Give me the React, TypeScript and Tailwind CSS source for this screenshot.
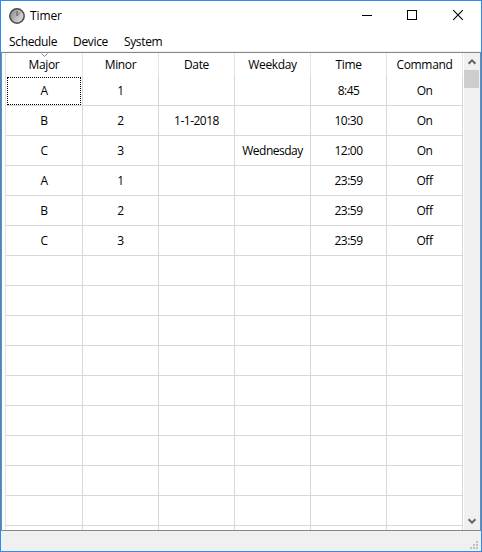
const columns = ['Major', 'Minor', 'Date', 'Weekday', 'Time', 'Command'];

const schedule: string[][] = [
  ['A', '1', '', '', '8:45', 'On'],
  ['B', '2', '1-1-2018', '', '10:30', 'On'],
  ['C', '3', '', 'Wednesday', '12:00', 'On'],
  ['A', '1', '', '', '23:59', 'Off'],
  ['B', '2', '', '', '23:59', 'Off'],
  ['C', '3', '', '', '23:59', 'Off'],
];

const emptyRow = ['', '', '', '', '', ''];
const rows = [...schedule, ...Array.from({ length: 10 }, () => emptyRow)];

function ClockIcon() {
  return (
    <svg width="18" height="18" viewBox="0 0 18 18" className="block">
      <defs>
        <linearGradient id="face" x1="0" y1="0.2" x2="1" y2="0.8">
          <stop offset="0" stopColor="#8c8c8c" />
          <stop offset="0.6" stopColor="#c4c4c4" />
          <stop offset="1" stopColor="#dedede" />
        </linearGradient>
      </defs>
      <circle cx="9" cy="9" r="7.2" fill="url(#face)" stroke="#484848" strokeWidth="1.5" />
      <path d="M9 9V4" stroke="#555" strokeWidth="1" />
      <path d="M9 9L12 5.5" stroke="#666" strokeWidth="0.8" />
    </svg>
  );
}

function TitleBar() {
  return (
    <div className="flex h-[30px] items-center">
      <div className="ml-[7px] w-[22px]">
        <ClockIcon />
      </div>
      <span className="tracking-[-0.1px]">Timer</span>
      <div className="ml-auto flex">
        <svg width="46" height="30" viewBox="0 0 46 30" shapeRendering="crispEdges">
          <path d="M18 14.5h10" stroke="#000" />
        </svg>
        <svg width="46" height="30" viewBox="0 0 46 30" shapeRendering="crispEdges">
          <rect x="17.5" y="9.5" width="9" height="9" fill="none" stroke="#000" />
        </svg>
        <svg width="45" height="30" viewBox="0 0 45 30">
          <path d="M17.2 9.2l9.6 9.6M26.8 9.2l-9.6 9.6" stroke="#000" strokeWidth="1.1" />
        </svg>
      </div>
    </div>
  );
}

function Table() {
  return (
    <div className="ml-[3px] w-[458px] shrink-0 overflow-hidden border-l border-[#e2e2e2]">
      <div className="grid h-[23px] grid-cols-[77px_repeat(5,76px)]">
        {columns.map((name, i) => (
          <div key={name} className="relative flex items-center justify-center border-r border-[#e5e5e5] pt-px">
            {i === 0 && (
              <svg width="7" height="4" viewBox="0 0 7 4" className="absolute left-[35px] top-0">
                <path d="M0.5 0.5l3 3l3-3" fill="none" stroke="#777" strokeWidth="0.9" />
              </svg>
            )}
            <span>{name}</span>
          </div>
        ))}
      </div>
      {rows.map((row, r) => (
        <div key={r} className="grid h-[30px] grid-cols-[77px_repeat(5,76px)] tracking-[-0.5px]">
          {row.map((cell, c) => (
            <div key={c} className="flex border-b border-r border-[#d8d8d8]">
              <div
                className={
                  r === 0 && c === 0
                    ? 'ml-px mr-px mt-px flex flex-1 items-center justify-center border border-dotted border-black'
                    : 'flex flex-1 items-center justify-center'
                }
              >
                {cell}
              </div>
            </div>
          ))}
        </div>
      ))}
    </div>
  );
}

function ScrollBar() {
  return (
    <div className="ml-px flex w-[17px] flex-col justify-between bg-[#f0f0f0]">
      <div>
        <svg width="16" height="17" viewBox="0 0 16 17" className="block">
          <path d="M4.6 10.8L8 7.4l3.4 3.4" fill="none" stroke="#606060" strokeWidth="2" />
        </svg>
        <div className="h-[18px] w-[15px] bg-[#cdcdcd]" />
      </div>
      <svg width="16" height="17" viewBox="0 0 16 17" className="block">
        <path d="M4.6 6.2L8 9.6l3.4-3.4" fill="none" stroke="#606060" strokeWidth="2" />
      </svg>
    </div>
  );
}

function StatusBar() {
  return (
    <div className="flex h-5 items-end justify-end bg-[#f0f0f0] pb-[2px] pr-[3px]">
      <svg width="8" height="8" viewBox="0 0 8 8" fill="#bfbfbf" shapeRendering="crispEdges">
        <path d="M6 0h2v2h-2zM3 3h2v2h-2zM6 3h2v2h-2zM0 6h2v2h-2zM3 6h2v2h-2zM6 6h2v2h-2z" />
      </svg>
    </div>
  );
}

export default function App() {
  return (
    <div className="flex h-[552px] w-[482px] flex-col border border-[#2d8ceb] bg-white font-['Open_Sans','Noto_Sans',sans-serif] text-[12px] leading-4 tracking-[-0.35px] text-black">
      <TitleBar />
      <div className="flex h-[20px] items-center gap-4 pl-2 pt-px">
        <span>Schedule</span>
        <span>Device</span>
        <span>System</span>
      </div>
      <div className="h-px bg-[#f0f0f0]" />
      <div className="flex h-[479px] overflow-hidden border border-[#828790]">
        <Table />
        <ScrollBar />
      </div>
      <StatusBar />
    </div>
  );
}
